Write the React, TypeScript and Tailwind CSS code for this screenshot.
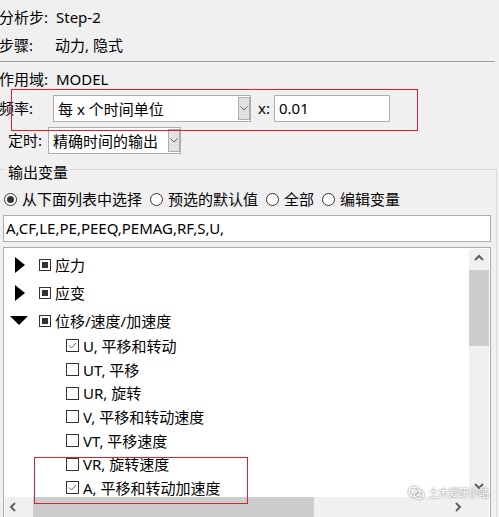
import React from 'react';

const Chevron = ({ dir }: { dir: 'up' | 'down' | 'left' | 'right' }) => {
  const pts = {
    up: '1,6 5,2 9,6',
    down: '1,2 5,6 9,2',
    left: '6,1 2,5 6,9',
    right: '2,1 6,5 2,9',
  }[dir];
  return (
    <svg width="10" height="10" viewBox="0 0 10 10">
      <polyline points={pts} fill="none" stroke="#606060" strokeWidth="2" />
    </svg>
  );
};

const SelectBox = ({ text, className }: { text: string; className: string }) => (
  <div className={`flex h-[27px] bg-white border border-[#adadad] ${className}`}>
    <div className="flex-1 flex items-center pl-[4px] leading-[20px] whitespace-nowrap overflow-hidden">{text}</div>
    <div className="w-[12px] my-[1px] bg-[#e1e1e1] border border-[#adadad] flex items-center justify-center">
      <svg width="8" height="5" viewBox="0 0 8 5">
        <polyline points="0.5,0.5 4,4 7.5,0.5" fill="none" stroke="#606060" strokeWidth="1" />
      </svg>
    </div>
  </div>
);

const Radio = ({ checked, label }: { checked?: boolean; label: string }) => (
  <div className="flex items-center gap-[5px]">
    <div className="w-[13px] h-[13px] rounded-full border border-[#333] bg-white flex items-center justify-center">
      {checked && <div className="w-[7px] h-[7px] rounded-full bg-[#333]" />}
    </div>
    <span className="leading-[20px]">{label}</span>
  </div>
);

const Group = ({ open, label, last }: { open?: boolean; label: string; last?: boolean }) => (
  <div className={`flex items-center ${last ? 'h-[27px]' : 'h-[28px]'}`}>
    <div className="w-[34px] flex items-center">
      {open ? (
        <svg className="ml-[5px]" width="18" height="9" viewBox="0 0 18 9">
          <polygon points="0,0 18,0 9,9" fill="#000" />
        </svg>
      ) : (
        <svg className="ml-[10px]" width="10" height="16" viewBox="0 0 10 16">
          <polygon points="0,0 10,8 0,16" fill="#000" />
        </svg>
      )}
    </div>
    <div className="w-[12px] h-[12px] border border-[#333] bg-white flex items-center justify-center">
      <div className="w-[6px] h-[6px] bg-[#333]" />
    </div>
    <span className="ml-[4px] leading-[20px] whitespace-nowrap">{label}</span>
  </div>
);

const Item = ({ checked, label }: { checked?: boolean; label: string }) => (
  <div className="flex items-center h-[23.7px] pl-[61px]">
    <div className="w-[13px] h-[13px] border border-[#333] bg-white flex items-center justify-center">
      {checked && (
        <svg width="11" height="11" viewBox="0 0 11 11">
          <polyline points="2,5.5 4.5,8 9,3" fill="none" stroke="#666" strokeWidth="1" />
        </svg>
      )}
    </div>
    <span className="ml-[4px] leading-[20px] whitespace-nowrap">{label}</span>
  </div>
);

export default function App() {
  return (
    <div className="relative w-[499px] h-[517px] overflow-hidden bg-[#f0f0f0] text-[15px] text-black font-['Noto_Sans','Noto_Sans_CJK_SC',sans-serif]">
      <div className="pt-[6px]">
        <div className="flex items-center h-[22px]">
          <span className="w-[57px] -ml-[1px] shrink-0">分析步:</span>
          <span>Step-2</span>
        </div>
        <div className="flex items-center h-[22px] mt-[6px]">
          <span className="w-[56px] -ml-[1px] shrink-0">步骤:</span>
          <span>动力, 隐式</span>
        </div>
        <div className="mt-[5px] w-[495px] border-t border-[#a0a0a0]" />
        <div className="flex items-center h-[22px] mt-[6px]">
          <span className="w-[57px] -ml-[1px] shrink-0">作用域:</span>
          <span>MODEL</span>
        </div>
        <div className="flex items-center h-[27px] mt-[5px]">
          <span className="w-[54px] -ml-[1px] shrink-0">频率:</span>
          <SelectBox text="每 x 个时间单位" className="w-[198px]" />
          <span className="ml-[7px] w-[16px]">x:</span>
          <div className="w-[116px] h-[27px] bg-white border border-[#adadad] flex items-center pl-[4px]">0.01</div>
        </div>
        <div className="flex items-center h-[27px] mt-[5px]">
          <span className="ml-[8px] w-[40px] shrink-0">定时:</span>
          <SelectBox text="精确时间的输出" className="w-[133px]" />
        </div>

        <fieldset className="mt-[4px] -ml-[4px] w-[501px] border border-[#d9d9d9] pl-[6px] pr-[5px]">
          <legend className="ml-[3px] px-[2px] h-[22px] pt-[6px] leading-[16px]">输出变量</legend>
          <div className="flex items-center h-[22px] mt-[8px] ml-[1px] gap-[8px]">
            <Radio checked label="从下面列表中选择" />
            <Radio label="预选的默认值" />
            <Radio label="全部" />
            <Radio label="编辑变量" />
          </div>
          <div className="mt-[5px] h-[27px] bg-white border border-[#adadad] flex items-center pl-[2px]">
            A,CF,LE,PE,PEEQ,PEMAG,RF,S,U,
          </div>
          <div className="mt-[5px] h-[275px] bg-white border border-[#adadad] p-px flex flex-col">
            <div className="flex h-[248px]">
              <div className="flex-1 pt-[2px]">
                <Group label="应力" />
                <Group label="应变" />
                <Group open last label="位移/速度/加速度" />
                <Item checked label="U, 平移和转动" />
                <Item label="UT, 平移" />
                <Item label="UR, 旋转" />
                <Item label="V, 平移和转动速度" />
                <Item label="VT, 平移速度" />
                <Item label="VR, 旋转速度" />
                <Item checked label="A, 平移和转动加速度" />
              </div>
              <div className="w-[20px] bg-[#f0f0f0] flex flex-col">
                <div className="h-[20px] flex items-center justify-center"><Chevron dir="up" /></div>
                <div className="mt-[1px] h-[76px] bg-[#cdcdcd]" />
                <div className="flex-1" />
                <div className="h-[20px] flex items-center justify-center"><Chevron dir="down" /></div>
              </div>
            </div>
            <div className="flex h-[20px] bg-[#f0f0f0]">
              <div className="w-[18px] flex items-center justify-center"><Chevron dir="left" /></div>
              <div className="ml-[10px] w-[281px] bg-[#cdcdcd]" />
              <div className="flex-1" />
              <div className="w-[20px] flex items-center justify-center"><Chevron dir="right" /></div>
              <div className="w-[20px]" />
            </div>
          </div>
        </fieldset>
      </div>

      <div className="absolute left-[11px] top-[89px] w-[407px] h-[42px] border border-[#e0202a]" />
      <div className="absolute left-[34px] top-[457px] w-[214px] h-[47px] border border-[#e0202a]" />

      <div className="absolute left-[408px] top-[486px] flex items-center gap-[3px] whitespace-nowrap text-white text-[11px] tracking-[-1px] [text-shadow:0_0_2px_#555]">
        <svg width="17" height="14" viewBox="0 0 20 16" className="drop-shadow-[0_0_1px_#555]">
          <ellipse cx="7.5" cy="6.5" rx="6.5" ry="5.5" fill="none" stroke="#fff" strokeWidth="1.4" />
          <ellipse cx="13" cy="10" rx="5.5" ry="4.5" fill="none" stroke="#fff" strokeWidth="1.4" />
        </svg>
        <span className="leading-[14px]">土木爱研小站</span>
      </div>
    </div>
  );
}
